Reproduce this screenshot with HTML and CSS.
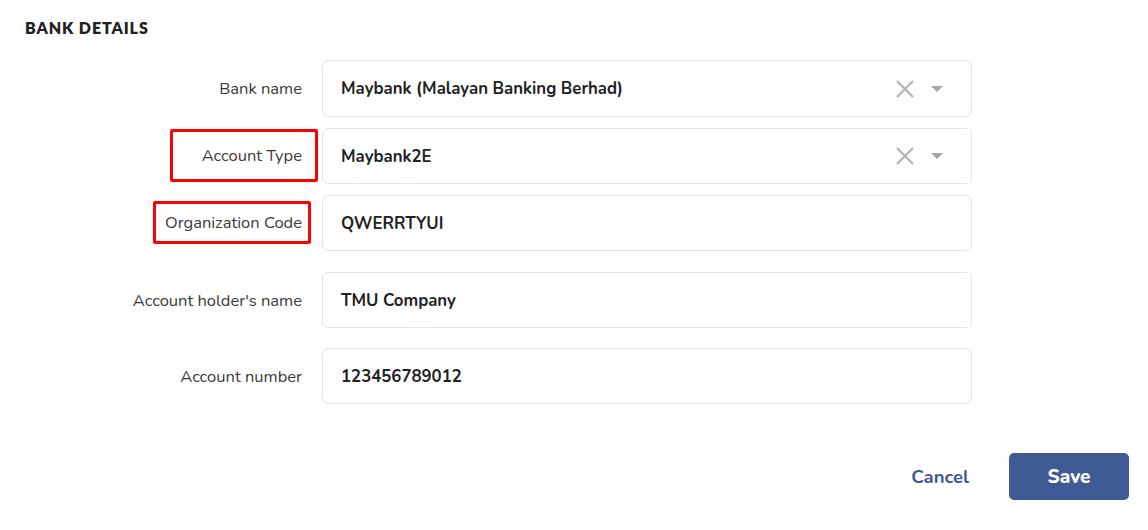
FILE: index.html
```html
<!DOCTYPE html>
<html>
<head>
<meta charset="utf-8">
<link rel="stylesheet" href="styles.css">
</head>
<body>
<div class="page">
  <h2 class="title">BANK DETAILS</h2>
  <div class="form">
    <div class="row first">
      <label class="label">Bank name</label>
      <div class="field select">
        <span class="value">Maybank (Malayan Banking Berhad)</span>
        <span class="controls">
          <svg class="clear" width="20" height="20" viewBox="0 0 20 20"><path d="M2 2 L18 18 M18 2 L2 18" stroke="#b3b3b3" stroke-width="2.2" fill="none"/></svg>
          <svg class="caret" width="12" height="8" viewBox="0 0 12 8"><path d="M0 1 H12 L6 7 Z" fill="#a6a6a6"/></svg>
        </span>
      </div>
    </div>
    <div class="row tight">
      <label class="label"><span class="mark mark-type">Account Type</span></label>
      <div class="field select">
        <span class="value">Maybank2E</span>
        <span class="controls">
          <svg class="clear" width="20" height="20" viewBox="0 0 20 20"><path d="M2 2 L18 18 M18 2 L2 18" stroke="#b3b3b3" stroke-width="2.2" fill="none"/></svg>
          <svg class="caret" width="12" height="8" viewBox="0 0 12 8"><path d="M0 1 H12 L6 7 Z" fill="#a6a6a6"/></svg>
        </span>
      </div>
    </div>
    <div class="row wide">
      <label class="label"><span class="mark mark-org">Organization Code</span></label>
      <div class="field"><span class="value">QWERRTYUI</span></div>
    </div>
    <div class="row">
      <label class="label">Account holder's name</label>
      <div class="field"><span class="value">TMU Company</span></div>
    </div>
    <div class="row">
      <label class="label">Account number</label>
      <div class="field"><span class="value">123456789012</span></div>
    </div>
  </div>
  <div class="actions">
    <button class="btn-cancel">Cancel</button>
    <button class="btn-save">Save</button>
  </div>
</div>
</body>
</html>
```
FILE: styles.css
```css
* { box-sizing: border-box; }
html, body { margin: 0; padding: 0; background: #fff; }
body { font-family: "Nunito", "Lato", "Open Sans", sans-serif; color: #222; }
.page { width: 1148px; height: 530px; padding: 18px 19px 0 25px; }
.title { margin: 0; font-family: "Lato", sans-serif; font-weight: 800; font-size: 16px; letter-spacing: 0.9px; color: #222; line-height: 20px; }
.form { margin-top: 22px; display: flex; flex-direction: column; }
.row { display: flex; align-items: center; margin-bottom: 20px; }
.row.first { margin-bottom: 11px; }
.row.tight { margin-bottom: 11px; }
.row.wide { margin-bottom: 21px; }
.label { width: 297px; display: flex; justify-content: flex-end; align-items: center; padding-right: 20px; font-size: 16.5px; color: #3a3a3a; flex: none; }
.mark { display: block; border: 3px solid #f00; border-radius: 2px; text-align: right; }
.mark-type { width: 148px; height: 53px; line-height: 47px; padding-right: 13px; margin-right: -16px; margin-top: -1px; }
.mark-org { width: 158px; height: 43px; line-height: 37px; padding-right: 6px; margin-right: -9px; margin-top: -1px; }
.field { width: 650px; height: 56px; border: 1px solid #e3e3e3; border-radius: 6px; display: flex; align-items: center; padding: 0 18px; flex: none; }
.row.first .field { height: 57px; }
.value { font-weight: 700; font-size: 16.8px; color: #222; flex: 1; }
.controls { display: flex; align-items: center; gap: 16px; padding-right: 10px; }
.clear, .caret { display: block; }
.actions { display: flex; justify-content: flex-end; align-items: center; margin-top: 29px; gap: 40px; }
.btn-cancel { border: none; background: none; font-family: inherit; font-weight: 700; font-size: 18.5px; color: #3f5694; padding: 0; }
.btn-save { border: none; background: #405a96; color: #fff; font-family: inherit; font-weight: 800; font-size: 19px; width: 120px; height: 47px; border-radius: 5px; }
```
